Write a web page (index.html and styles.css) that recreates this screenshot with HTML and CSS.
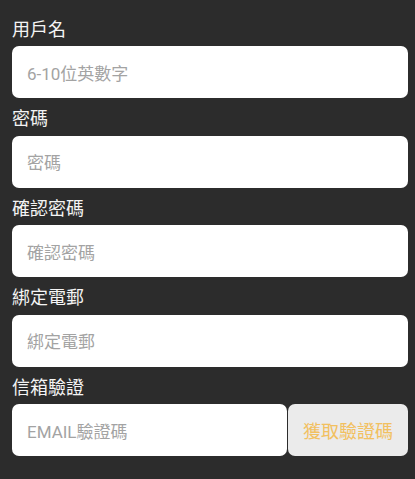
FILE: index.html
```html
<!DOCTYPE html>
<html lang="zh-Hant">
<head>
<meta charset="utf-8">
<link rel="stylesheet" href="styles.css">
</head>
<body>
<form class="form">
  <div class="field">
    <label class="label">用戶名</label>
    <div class="input"><span class="ph">6-10位英數字</span></div>
  </div>
  <div class="field">
    <label class="label">密碼</label>
    <div class="input"><span class="ph">密碼</span></div>
  </div>
  <div class="field">
    <label class="label">確認密碼</label>
    <div class="input"><span class="ph">確認密碼</span></div>
  </div>
  <div class="field">
    <label class="label">綁定電郵</label>
    <div class="input"><span class="ph">綁定電郵</span></div>
  </div>
  <div class="field">
    <label class="label">信箱驗證</label>
    <div class="row">
      <div class="input grow"><span class="ph">EMAIL驗證碼</span></div>
      <div class="btn">獲取驗證碼</div>
    </div>
  </div>
</form>
</body>
</html>
```
FILE: styles.css
```css
html, body {
  margin: 0;
  padding: 0;
  background: #2c2c2c;
  font-family: Roboto, "Noto Sans CJK TC", "Noto Sans", sans-serif;
}
.form {
  padding: 8.5px 7px 0 12px;
  display: flex;
  flex-direction: column;
}
.field {
  display: flex;
  flex-direction: column;
}
.label {
  display: block;
  height: 37.5px;
  box-sizing: border-box;
  padding-top: 4px;
  line-height: 33.5px;
  font-size: 18px;
  color: #f4f4f4;
}
.input {
  height: 52px;
  background: #ffffff;
  border-radius: 7px;
  display: flex;
  align-items: center;
  padding-left: 15px;
  box-sizing: border-box;
}
.ph {
  font-size: 17px;
  color: #a3a3a3;
}
.row {
  display: flex;
  gap: 1.5px;
}
.grow {
  flex: 1;
}
.btn {
  width: 120px;
  height: 52px;
  background: #ebebeb;
  border-radius: 7px;
  display: flex;
  align-items: center;
  justify-content: center;
  font-size: 18px;
  color: #f2c060;
}
```
